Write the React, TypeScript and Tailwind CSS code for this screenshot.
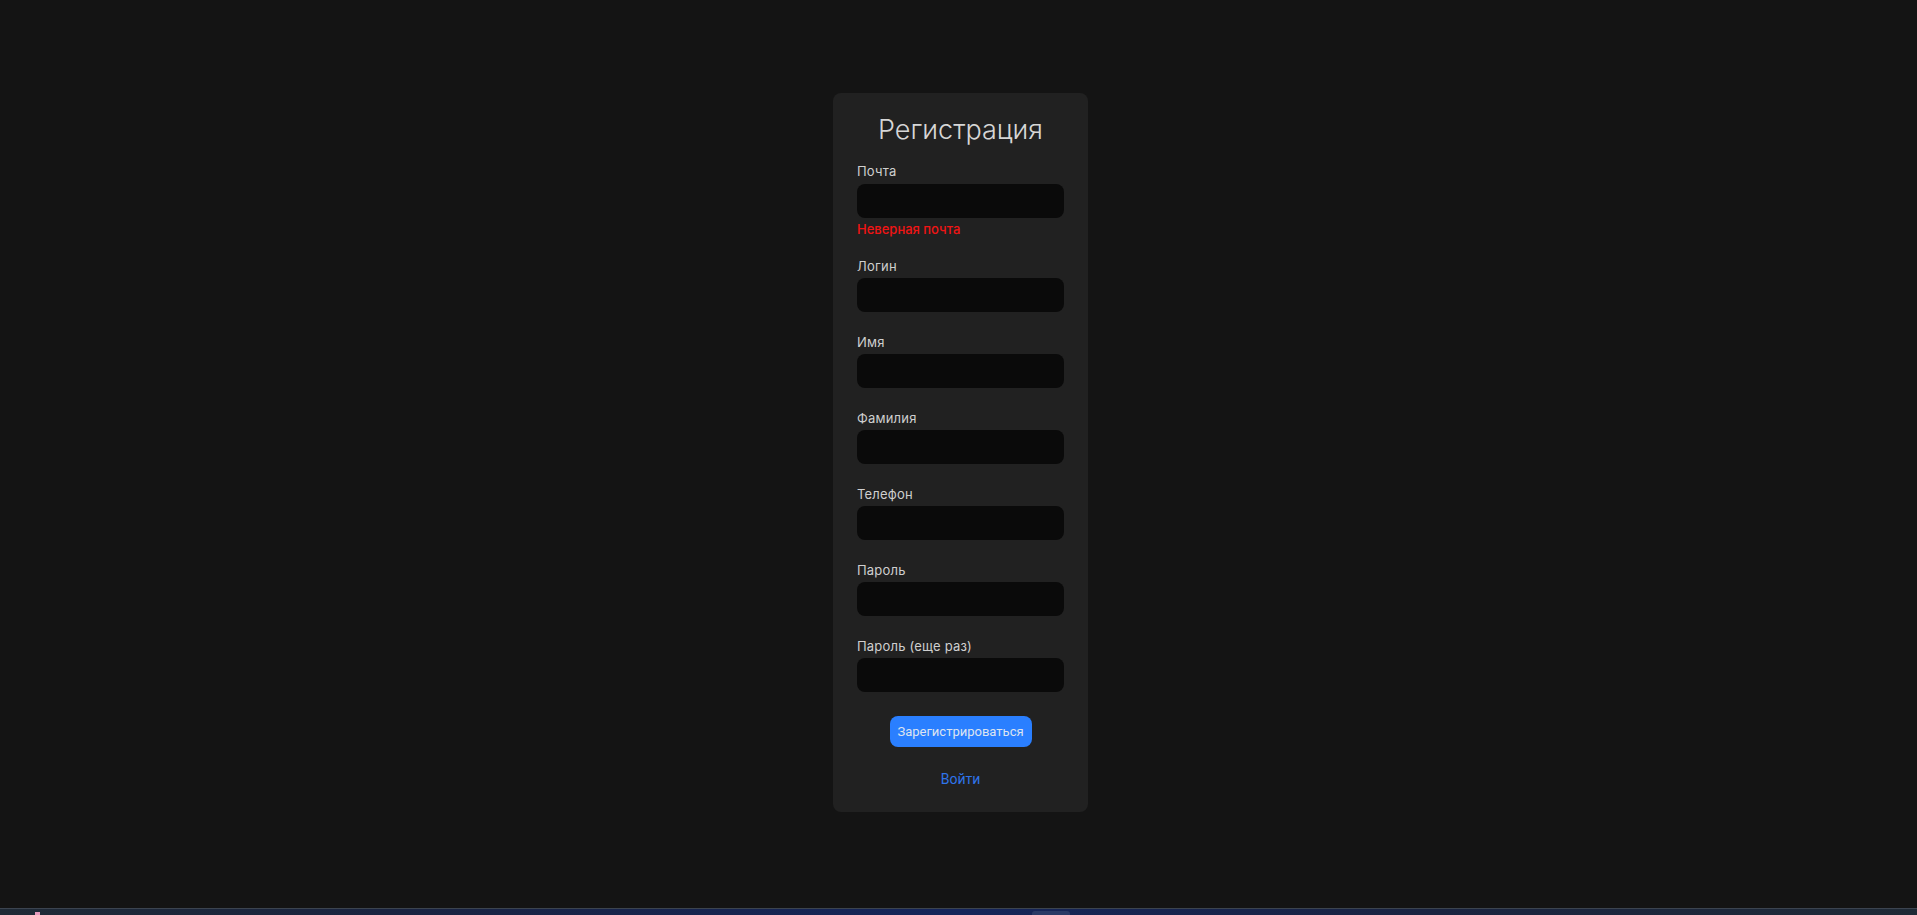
import React from "react";

const fields = ["Логин", "Имя", "Фамилия", "Телефон", "Пароль", "Пароль (еще раз)"];

function Field({ label, first }: { label: string; first?: boolean }) {
  return (
    <div className={first ? "flex flex-col" : "flex flex-col mt-[22px]"}>
      <label className="text-[13px] leading-[16px] text-[#cfcfcf] font-normal tracking-[0.2px]">{label}</label>
      <input className="mt-[4px] h-[34px] w-full rounded-[8px] bg-[#0a0a0a] outline-none border-0 text-[#ddd] px-3 text-sm" />
    </div>
  );
}

export default function App() {
  return (
    <div
      className="h-[915px] w-full flex flex-col bg-[#141414] overflow-hidden"
      style={{ fontFamily: "Inter, 'Noto Sans', sans-serif" }}
    >
      <div className="flex-1 flex justify-center pl-[4px] pt-[93px]">
        <div className="w-[255px] h-[719px] rounded-[8px] bg-[#212121] px-[24px] pt-[20px] pb-[25px] flex flex-col">
          <h1 className="text-center text-[27px] leading-[34px] font-light text-[#d6d6d6]">Регистрация</h1>
          <div className="mt-[16px] flex flex-col">
            <label className="text-[13px] leading-[16px] text-[#cfcfcf] tracking-[0.2px]">Почта</label>
            <input className="mt-[5px] h-[34px] w-full rounded-[8px] bg-[#0a0a0a] outline-none border-0 text-[#ddd] px-3 text-sm" />
            <div className="mt-[3px] text-[13px] leading-[16px] font-medium text-[#f01414]">Неверная почта</div>
          </div>
          <div className="mt-[21px] flex flex-col">
            {fields.map((f, i) => (
              <Field key={f} label={f} first={i === 0} />
            ))}
          </div>
          <div className="mt-[24px] flex justify-center">
            <button
              className="h-[31px] w-[142px] rounded-[8px] bg-[#2a7fff] text-[13px] text-[#dde4f0]"
              style={{ fontFamily: "Roboto, 'Liberation Sans', sans-serif" }}
            >
              Зарегистрироваться
            </button>
          </div>
          <div className="mt-[24px] flex justify-center">
            <a
              className="text-[14px] leading-[16px] text-[#2f74ea] cursor-pointer"
              style={{ fontFamily: "Roboto, 'Liberation Sans', sans-serif" }}
            >
              Войти
            </a>
          </div>
        </div>
      </div>
      <div className="h-[7px] border-t border-[#3c4450] bg-[linear-gradient(90deg,#1f2a36_0%,#1a2440_20%,#15255a_50%,#1a2440_75%,#1f2a36_100%)] relative">
        <div className="absolute left-[35px] top-[3px] w-[5px] h-[4px] bg-[#e69bbd]" />
        <div className="absolute left-[1032px] top-[2px] w-[38px] h-[5px] rounded-t-[3px] bg-[#2a3a66]" />
      </div>
    </div>
  );
}
